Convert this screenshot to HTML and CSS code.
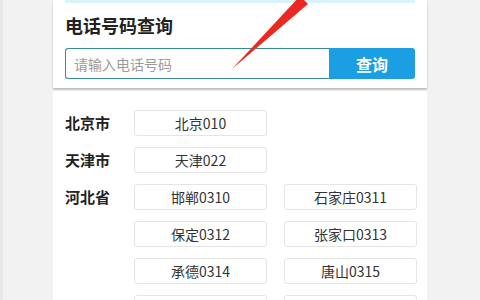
FILE: index.html
```html
<!DOCTYPE html>
<html lang="zh-CN">
<head>
    <meta charset="UTF-8">
    <meta name="viewport" content="width=device-width, initial-scale=1.0">
    <title>电话号码查询</title>
    <link rel="stylesheet" href="styles.css">
</head>
<body>
    <div class="page">
        <div class="search-card">
            <div class="top-strip"></div>
            <h1 class="title">电话号码查询</h1>
            <div class="search-row">
                <input type="text" class="search-input" placeholder="请输入电话号码">
                <button class="search-button">查询</button>
            </div>
        </div>

        <div class="area-list">
            <div class="province">
                <div class="province-name">北京市</div>
                <div class="cities">
                    <div class="city">北京010</div>
                </div>
            </div>
            <div class="province">
                <div class="province-name">天津市</div>
                <div class="cities">
                    <div class="city">天津022</div>
                </div>
            </div>
            <div class="province">
                <div class="province-name">河北省</div>
                <div class="cities">
                    <div class="city">邯郸0310</div>
                    <div class="city">石家庄0311</div>
                    <div class="city">保定0312</div>
                    <div class="city">张家口0313</div>
                    <div class="city">承德0314</div>
                    <div class="city">唐山0315</div>
                    <div class="city">廊坊0316</div>
                    <div class="city">沧州0317</div>
                </div>
            </div>
        </div>

        <!-- 红色箭头标注 -->
        <svg class="arrow" width="90" height="80" viewBox="0 0 90 80">
            <polygon points="8,69 76,-4 84,4" fill="#ea2a22"/>
        </svg>
    </div>
</body>
</html>
```

FILE: styles.css
```css
* {
    margin: 0;
    padding: 0;
    box-sizing: border-box;
}

body {
    font-family: "Noto Sans CJK SC", "Noto Sans", sans-serif;
    background: #f2f2f2;
    height: 300px;
    overflow: hidden;
    border-left: 3px solid #e8e8e8;
}

.page {
    position: relative;
    width: 374px;
    margin-left: 50px;
}

.search-card {
    background: white;
    padding: 0 12px 9px;
    box-shadow: 0 2px 2px rgba(0,0,0,0.22);
    position: relative;
    z-index: 1;
}

.top-strip {
    height: 3px;
    background: #d9f4fb;
}

.title {
    margin-top: 10px;
    font-size: 18px;
    line-height: 24px;
    font-weight: bold;
    color: #222;
}

.search-row {
    display: flex;
    margin-top: 11px;
    height: 31px;
}

.search-input {
    flex: 1;
    border: 1px solid #3b8e90;
    border-right: none;
    border-radius: 3px 0 0 3px;
    padding: 0 8px;
    font-family: inherit;
    font-size: 14px;
    color: #333;
    outline: none;
}

.search-input::placeholder {
    color: #9a9a9a;
}

.search-button {
    width: 86px;
    border: none;
    border-radius: 0 3px 3px 0;
    background: #1c9ee3;
    color: white;
    font-family: inherit;
    font-size: 16px;
    font-weight: bold;
}

.area-list {
    background: white;
    margin-top: 2px;
    padding: 20px 0 0 12px;
    height: 300px;
}

.province {
    display: flex;
    margin-bottom: 11px;
}

.province-name {
    width: 69px;
    font-size: 15px;
    font-weight: bold;
    line-height: 26px;
    color: #222;
}

.cities {
    display: grid;
    grid-template-columns: 133px 133px;
    gap: 11px 17px;
}

.city {
    height: 26px;
    line-height: 24px;
    border: 1px solid #e4e4e4;
    border-radius: 3px;
    text-align: center;
    font-size: 14px;
    color: #333;
    background: white;
}

.arrow {
    position: absolute;
    left: 171px;
    top: 0;
    z-index: 2;
}
```
